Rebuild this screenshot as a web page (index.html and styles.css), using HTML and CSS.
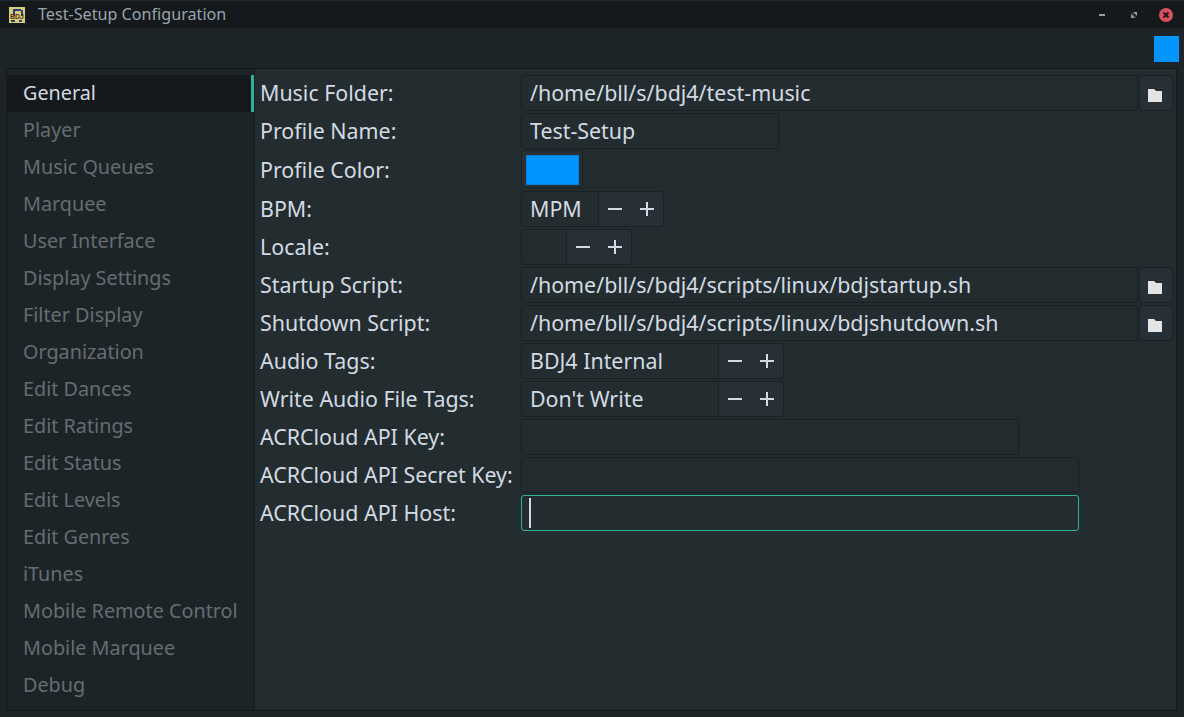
FILE: index.html
```html
<!DOCTYPE html>
<html lang="en">
<head>
    <meta charset="UTF-8">
    <meta name="viewport" content="width=device-width, initial-scale=1.0">
    <title>Test-Setup Configuration</title>
    <link rel="stylesheet" href="styles.css">
</head>
<body>
    <div class="window">
        <div class="titlebar">
            <svg class="app-icon" width="16" height="16" viewBox="0 0 16 16">
                <rect width="16" height="16" fill="#d6cf72"/>
                <path d="M4 2h8v2H6v5H4z" fill="#2c3a8a"/>
                <path d="M12 3h2v6h-2z" fill="#2c3a8a"/>
                <path d="M2 13h4v2H2zM10 13h3v2h-3z" fill="#2c3a8a"/>
                <text class="logo-text" x="1" y="12">BDJ</text>
            </svg>
            <span class="title">Test-Setup Configuration</span>
            <div class="win-btns">
                <svg width="14" height="14" viewBox="0 0 14 14"><rect x="4" y="6" width="6" height="2" fill="#9a9d9f"/></svg>
                <svg width="14" height="14" viewBox="0 0 14 14"><path d="M5 5l4 4-1 1-4-4z" fill="#4c5052"/><path d="M6 4h4v4zM4 10V6l4 4z" fill="#9a9d9f"/></svg>
                <svg width="14" height="14" viewBox="0 0 14 14"><circle cx="7" cy="7" r="7" fill="#d5525e"/><path d="M4.5 4.5l5 5M9.5 4.5l-5 5" stroke="#26191c" stroke-width="2"/></svg>
            </div>
        </div>
        <div class="toolbar"><div class="profile-swatch"></div></div>
        <div class="notebook">
            <ul class="tabs">
                <li class="tab active">General</li>
                <li class="tab">Player</li>
                <li class="tab">Music Queues</li>
                <li class="tab">Marquee</li>
                <li class="tab">User Interface</li>
                <li class="tab">Display Settings</li>
                <li class="tab">Filter Display</li>
                <li class="tab">Organization</li>
                <li class="tab">Edit Dances</li>
                <li class="tab">Edit Ratings</li>
                <li class="tab">Edit Status</li>
                <li class="tab">Edit Levels</li>
                <li class="tab">Edit Genres</li>
                <li class="tab">iTunes</li>
                <li class="tab">Mobile Remote Control</li>
                <li class="tab">Mobile Marquee</li>
                <li class="tab">Debug</li>
            </ul>
            <div class="page">
                <div class="row">
                    <label class="lbl">Music Folder:</label>
                    <div class="entry grow">/home/bll/s/bdj4/test-music</div>
                    <div class="folder-btn"><svg width="14" height="13" viewBox="0 0 14 13"><path d="M0 0h6l2 2h6v11H0z" fill="#e4e4e4"/></svg></div>
                </div>
                <div class="row">
                    <label class="lbl">Profile Name:</label>
                    <div class="entry w-name">Test-Setup</div>
                </div>
                <div class="row row-color">
                    <label class="lbl">Profile Color:</label>
                    <div class="color-btn"><div class="color-fill"></div></div>
                </div>
                <div class="row">
                    <label class="lbl">BPM:</label>
                    <div class="spin w-bpm"><span class="spin-val">MPM</span><span class="spin-btns"><svg width="16" height="16" viewBox="0 0 16 16"><path d="M1 7h14v2H1z"/></svg><svg width="16" height="16" viewBox="0 0 16 16"><path d="M1 7h6V1h2v6h6v2H9v6H7V9H1z"/></svg></span></div>
                </div>
                <div class="row">
                    <label class="lbl">Locale:</label>
                    <div class="spin w-locale"><span class="spin-val"></span><span class="spin-btns"><svg width="16" height="16" viewBox="0 0 16 16"><path d="M1 7h14v2H1z"/></svg><svg width="16" height="16" viewBox="0 0 16 16"><path d="M1 7h6V1h2v6h6v2H9v6H7V9H1z"/></svg></span></div>
                </div>
                <div class="row">
                    <label class="lbl">Startup Script:</label>
                    <div class="entry grow">/home/bll/s/bdj4/scripts/linux/bdjstartup.sh</div>
                    <div class="folder-btn"><svg width="14" height="13" viewBox="0 0 14 13"><path d="M0 0h6l2 2h6v11H0z" fill="#e4e4e4"/></svg></div>
                </div>
                <div class="row">
                    <label class="lbl">Shutdown Script:</label>
                    <div class="entry grow">/home/bll/s/bdj4/scripts/linux/bdjshutdown.sh</div>
                    <div class="folder-btn"><svg width="14" height="13" viewBox="0 0 14 13"><path d="M0 0h6l2 2h6v11H0z" fill="#e4e4e4"/></svg></div>
                </div>
                <div class="row">
                    <label class="lbl">Audio Tags:</label>
                    <div class="spin w-tags"><span class="spin-val">BDJ4 Internal</span><span class="spin-btns"><svg width="16" height="16" viewBox="0 0 16 16"><path d="M1 7h14v2H1z"/></svg><svg width="16" height="16" viewBox="0 0 16 16"><path d="M1 7h6V1h2v6h6v2H9v6H7V9H1z"/></svg></span></div>
                </div>
                <div class="row">
                    <label class="lbl">Write Audio File Tags:</label>
                    <div class="spin w-tags"><span class="spin-val">Don't Write</span><span class="spin-btns"><svg width="16" height="16" viewBox="0 0 16 16"><path d="M1 7h14v2H1z"/></svg><svg width="16" height="16" viewBox="0 0 16 16"><path d="M1 7h6V1h2v6h6v2H9v6H7V9H1z"/></svg></span></div>
                </div>
                <div class="row">
                    <label class="lbl">ACRCloud API Key:</label>
                    <div class="entry w-key"></div>
                </div>
                <div class="row">
                    <label class="lbl">ACRCloud API Secret Key:</label>
                    <div class="entry w-host"></div>
                </div>
                <div class="row">
                    <label class="lbl">ACRCloud API Host:</label>
                    <div class="entry w-host focused"><span class="caret"></span></div>
                </div>
            </div>
        </div>
    </div>
</body>
</html>
```

FILE: styles.css
```css
*{
    margin:0;
    padding:0;
    box-sizing:border-box;
}

html,body{
    height:100%;
}
body{
    background:#14181a;
    font-family:"Noto Sans",sans-serif;
    font-size:21.4px;
    color:#d3dae3;
    overflow:hidden;
}

.window{
    height:717px;
    display:flex;
    flex-direction:column;
    background:#1d2427;
}

.titlebar{
    height:28px;
    flex:none;
    display:flex;
    align-items:center;
    padding-left:9px;
    background:#15191b;
    border-top:1px solid #22292c;
}
.app-icon{
    flex:none;
}
.logo-text{
    font-family:"Liberation Sans",sans-serif;
    font-size:7px;
    font-weight:bold;
    fill:#5a3208;
}
.title{
    margin-left:13px;
    margin-bottom:2px;
    font-size:16.15px;
    color:#98a4ad;
}
.win-btns{
    margin-left:auto;
    display:flex;
    gap:18px;
    padding-right:11px;
}

.toolbar{
    height:40px;
    flex:none;
    display:flex;
    justify-content:flex-end;
    align-items:flex-end;
    padding:0 5px 6px 0;
    margin-left:2px;
    background:#1d2427;
}
.profile-swatch{
    width:25px;
    height:26px;
    background:#0095ff;
}

.notebook{
    flex:1;
    display:flex;
    margin:0 7px 6px 6px;
    border:1px solid #14181a;
}

.tabs{
    width:247px;
    flex:none;
    list-style:none;
    padding-top:6px;
    background:#1d2427;
    font-size:19.8px;
}
.tab{
    height:37px;
    line-height:36px;
    padding-left:16px;
    color:#656d71;
}
.tab.active{
    color:#d3dae3;
    background:#15191b;
    border-right:3px solid #2eb398;
}

.page{
    flex:1;
    padding:6px 3px 0 5px;
    background:#232d30;
    border-left:1px solid #181d20;
}

.row{
    display:flex;
    align-items:center;
    height:36px;
    margin-bottom:2px;
}
.row-color{
    height:38px;
    margin-top:-1px;
    margin-bottom:3px;
}

.lbl{
    width:261px;
    flex:none;
    margin-bottom:2px;
    color:#d3dae3;
    white-space:nowrap;
}
.row-color .lbl{
    margin-bottom:0;
}

.entry{
    height:36px;
    line-height:34px;
    padding:0 8px;
    border:1px solid #1a2124;
    border-radius:3px;
    background:#232d30;
    white-space:nowrap;
}
.grow{
    flex:1;
}
.w-name{
    width:258px;
}
.w-key{
    width:498px;
}
.w-host{
    width:558px;
}
.focused{
    border-color:#2eb398;
    display:flex;
    align-items:center;
    padding-left:7px;
}
.caret{
    width:2px;
    height:30px;
    background:#d3dae3;
}

.folder-btn{
    width:34px;
    height:36px;
    margin-left:1px;
    padding-right:2px;
    display:flex;
    align-items:center;
    justify-content:center;
    background:#272f37;
    border:1px solid #1a2124;
    border-radius:3px;
}
.folder-btn svg{
    margin-top:4px;
}

.color-btn{
    width:62px;
    height:38px;
    padding:4px;
    background:#272f37;
    border:1px solid #1a2124;
    border-radius:3px;
}
.color-fill{
    width:53px;
    height:30px;
    background:#0095ff;
    border:1px solid #0c7fd0;
}

.spin{
    height:36px;
    display:flex;
    border:1px solid #1a2124;
    border-radius:3px;
}
.w-bpm{
    width:143px;
}
.w-locale{
    width:111px;
}
.w-tags{
    width:263px;
}
.spin-val{
    flex:1;
    line-height:34px;
    padding-left:8px;
    border-right:1px solid #1a2124;
}
.spin-btns{
    width:64px;
    flex:none;
    display:flex;
    align-items:center;
    justify-content:center;
    gap:16px;
    background:#272f37;
    border-radius:0 3px 3px 0;
}
.spin-btns svg{
    fill:#d3dae3;
}
```
